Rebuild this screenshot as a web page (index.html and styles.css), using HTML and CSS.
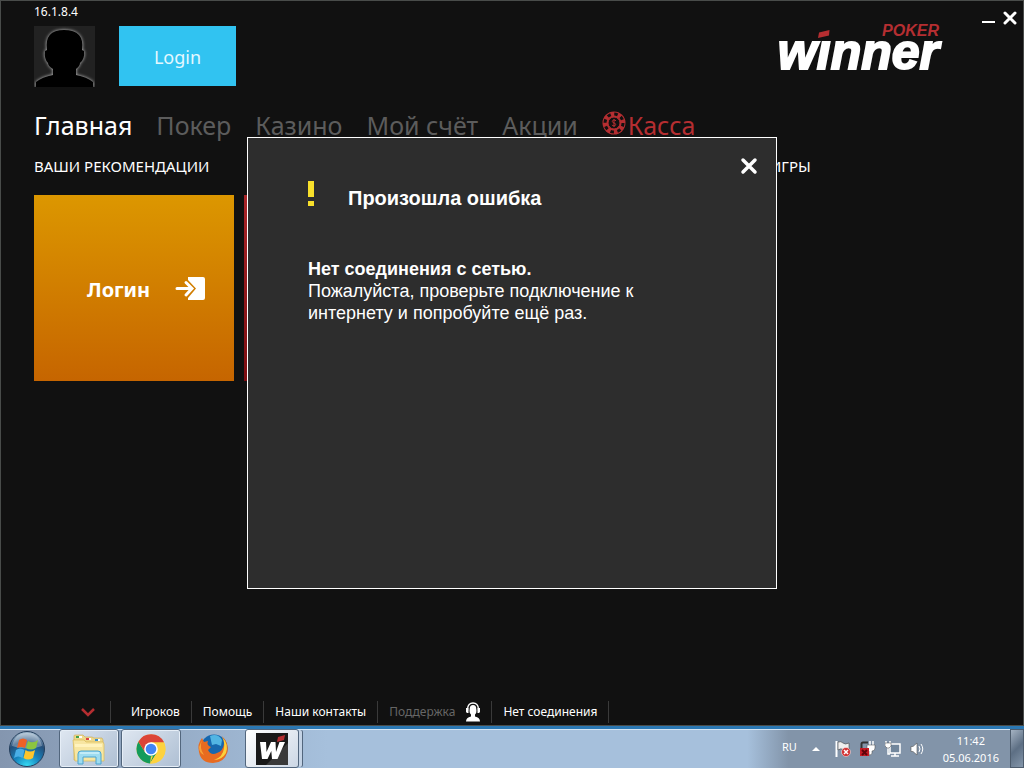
FILE: index.html
```html
<!DOCTYPE html>
<html lang="ru">
<head>
<meta charset="utf-8">
<title>Winner Poker</title>
<link rel="stylesheet" href="styles.css">
</head>
<body>
<div class="app">
  <header class="header">
    <div class="account">
      <span class="version">16.1.8.4</span>
      <div class="account-row">
        <svg class="avatar" viewBox="0 0 61 61" aria-hidden="true">
          <defs><filter id="glow" x="-30%" y="-30%" width="160%" height="160%"><feGaussianBlur stdDeviation="1.5"/></filter></defs>
          <rect width="61" height="61" fill="#222"/>
          <path fill="#aaa" stroke="#aaa" filter="url(#glow)" d="M2 61V56Q8 51 19 49V43Q14 40 14 37Q10 33 11 25L13 24Q10 4 30 4Q51 4 48 24L50 25Q51 33 46 37Q46 40 42 43V49Q53 51 59 56V61Z"/>
          <path d="M2 61V56Q8 51 19 49V43Q14 40 14 37Q10 33 11 25L13 24Q10 4 30 4Q51 4 48 24L50 25Q51 33 46 37Q46 40 42 43V49Q53 51 59 56V61Z"/>
        </svg>
        <button class="login-button" type="button">Login</button>
      </div>
    </div>
    <div class="logo" aria-label="Winner Poker">
      <span class="logo-sub">POKER</span>
      <span class="logo-name">wınner</span>
      <svg class="logo-dot" viewBox="0 0 12 8" aria-hidden="true"><path d="M1 2.500 11.500 0 11 5.500 0 8Z" fill="#b52e31"/></svg>
    </div>
    <div class="window-controls">
      <button type="button" aria-label="Свернуть"><svg width="13" height="14" viewBox="0 0 13 14"><path d="M0 11H13" stroke="#fff" stroke-width="2"/></svg></button>
      <button type="button" aria-label="Закрыть окно"><svg width="14" height="14" viewBox="0 0 14 14"><path d="M2 2 12 12M12 2 2 12" stroke="#fff" stroke-width="3" stroke-linecap="round"/></svg></button>
    </div>
  </header>

  <nav class="main-nav">
    <a class="active" href="#">Главная</a>
    <a href="#">Покер</a>
    <a href="#">Казино</a>
    <a href="#">Мой счёт</a>
    <a href="#">Акции</a>
    <a class="cashier" href="#"><svg width="24" height="24" viewBox="0 0 24 24" aria-hidden="true"><circle cx="12" cy="12" r="11.500" fill="#b52e31"/><circle cx="12" cy="12" r="9" fill="none" stroke="#111" stroke-width="3" stroke-dasharray="3.500 3.568"/><circle cx="12" cy="12" r="6" fill="#111" stroke="#b52e31"/><path d="M14 9.800Q13 8.800 11.800 9 10.200 9.300 10.300 10.500 10.500 11.600 12 12 13.800 12.400 13.700 13.600 13.500 14.900 12 14.900 10.700 14.900 9.900 14M12 8V16" fill="none" stroke="#b52e31"/></svg>Касса</a>
  </nav>

  <main class="content">
    <div class="headings">
      <h2>ВАШИ РЕКОМЕНДАЦИИ</h2>
      <h2>ИГРЫ</h2>
    </div>
    <div class="tiles">
      <button class="tile tile-login" type="button">Логин
        <svg width="31" height="24" viewBox="0 0 31 24" aria-hidden="true"><path d="M13 0H28Q30 0 30 2V21Q30 23 28 23H13V21L21 11.500 13 3Z" fill="#fff"/><path d="M2 11.500H16M11 5.500 17 11.500 11 18" fill="none" stroke="#fff" stroke-width="3" stroke-linecap="round"/></svg>
      </button>
      <div class="tile tile-red"></div>
    </div>
  </main>

  <footer class="status-bar">
    <button class="collapse" type="button" aria-label="Свернуть панель"><svg width="16" height="10" viewBox="0 0 16 10"><path d="M2 2 8 8 14 2" fill="none" stroke="#b52e31" stroke-width="2.500"/></svg></button>
    <a class="players" href="#">Игроков</a>
    <a href="#">Помощь</a>
    <a href="#">Наши контакты</a>
    <a class="support" href="#">Поддержка <svg width="16" height="20" viewBox="0 0 16 20" aria-hidden="true"><path d="M2.500 9V7Q3 1 8 1T13.500 7V9" fill="none" stroke="#fff" stroke-width="1.300"/><path d="M1 6H3.500V11H2L1 10ZM12.500 6H15V10L14 11H12.500ZM4.700 7Q4.700 3 8 3T11.300 7Q12 11 10 12.500V14.500Q15 15.500 15 19.500H1Q1 15.500 6 14.500V12.500Q4 11 4.700 7Z" fill="#fff"/></svg></a>
    <span>Нет соединения</span>
  </footer>

  <section class="dialog" role="alertdialog" aria-labelledby="dialog-title">
    <div class="dialog-head">
      <svg class="alert" width="8" height="26" viewBox="0 0 8 26" aria-hidden="true"><path d="M0 0H6V16H0ZM0 20H6V25H0Z" fill="#f8e02b"/></svg>
      <h1 id="dialog-title">Произошла ошибка</h1>
      <button type="button" aria-label="Закрыть"><svg width="18" height="18" viewBox="0 0 18 18"><path d="M3 3 15 15M15 3 3 15" stroke="#fff" stroke-width="3.500" stroke-linecap="round"/></svg></button>
    </div>
    <p><strong>Нет соединения с сетью.</strong><br>Пожалуйста, проверьте подключение к интернету и попробуйте ещё раз.</p>
  </section>
</div>

<div class="taskbar">
  <button class="start" type="button" aria-label="Пуск">
    <svg width="38" height="38" viewBox="0 0 38 38"><defs><radialGradient id="orb" cx=".5" cy="1" r=".95"><stop offset="0" stop-color="#36e0f7"/><stop offset=".4" stop-color="#1683bd"/><stop offset=".75" stop-color="#254e79"/><stop offset="1" stop-color="#9bb4ca"/></radialGradient></defs><circle cx="19" cy="19" r="17.500" fill="url(#orb)" stroke="#243e5c"/><path d="M4 16Q7 3 19 3T34 16Q19 21 4 16Z" fill="#fff" opacity=".3"/><path d="M11 10Q15 7 19 10L17 18Q13 16 9 18Z" fill="#ee6126"/><path d="M20 11Q25 14 30 10L28 18Q23 21 18 18Z" fill="#8cc53f"/><path d="M8 20Q12 17 16.500 20L14.500 28Q10 25 6 28Z" fill="#49aee6"/><path d="M17.500 20Q22 23 27 20L25 28Q20 31 15.500 28Z" fill="#fdc52c"/></svg>
  </button>
  <div class="task-list">
    <button class="task open" type="button" aria-label="Проводник">
      <svg width="34" height="32" viewBox="0 0 34 32"><path d="M2 3Q2 2 3 2H11L13 4H20L22 5H30L31 7V27H2Z" fill="#eed98c" stroke="#c9a94e" stroke-width=".6"/><path d="M4 3H10V5H4ZM14 5H19V7H14ZM23 6H28V8H23Z" fill="#fff"/><path d="M4 3H7V5H4Z" fill="#40a14b"/><path d="M14 5H17V7H14Z" fill="#d44"/><path d="M23 6H26V8H23Z" fill="#3890ce"/><path d="M1 7H12L14 9H31L32 11V28H3Z" fill="#f7e6a2" stroke="#d9b955" stroke-width=".7"/><path d="M3 11H30V14H3Z" fill="#fff3bd"/><path d="M6 31V21Q6 18 9 18H26Q29 18 29 21V31H24V24H11V31Z" fill="#9edcf0" stroke="#4ba4cf"/><path d="M8 20H27" stroke="#e6fbff"/></svg>
    </button>
    <button class="task open" type="button" aria-label="Chrome">
      <svg width="30" height="30" viewBox="0 0 30 30"><circle cx="15" cy="15" r="14.500" fill="#fdd23e"/><path d="M2.400 7.800 9 18 15 22 14 29.500A14.500 14.500 0 0 1 2.400 7.800Z" fill="#149b5b"/><path d="M14 29.500 21 18.500 15 20 9 19Q12 23 17 22Z" fill="#149b5b"/><path d="M21 18.500 14 29.500Q26 30 29 19 30 12 28 8.200H15Z" fill="#fdd23e"/><path d="M2.400 7.800A14.500 14.500 0 0 1 28 8.200H15L9 18Z" fill="#dc4437"/><circle cx="15" cy="15" r="6.800" fill="#fff"/><circle cx="15" cy="15" r="5.300" fill="#4285f4"/></svg>
    </button>
    <button class="task" type="button" aria-label="Firefox">
      <svg width="32" height="32" viewBox="0 0 32 32"><circle cx="17" cy="15" r="13.500" fill="#1768ae"/><path d="M13 3Q21 0 25 7L24 13 19 11 15 12Z" fill="#52b5e3"/><path d="M25 3Q32 10 30.500 19 27 30 16 30 4 30 2 19 0 11 5 5L7 9 11 8Q9 12 14 14L11 17Q14 23 20 20 26 18 27 11 27 6 25 3Z" fill="#e86b20"/><path d="M25 4Q32 11 29 20 25 27 17 27 26 24 27 15Q28 9 25 4Z" fill="#fbd13b"/><path d="M5 7Q2 15 7 22 2 20 2 14Z" fill="#f7a136"/></svg>
    </button>
    <button class="task open current" type="button" aria-label="Winner Poker">
      <svg width="32" height="32" viewBox="0 0 32 32"><path d="M0 0H32V32H0Z" fill="#191919"/><path d="M32 10V32H10Z" fill="#3a3a3a"/><path d="M4 9H10L10.500 19 15 9H19.500L20 19 23.500 9H29L21.500 26H16L15.300 18 11.500 26H6Z" fill="#fff"/><path d="M22 4 29 2 28 7 21 9Z" fill="#b52e31"/></svg>
    </button>
  </div>
  <div class="tray">
    <span class="lang">RU</span>
    <svg class="expand" width="8" height="4" viewBox="0 0 8 4" aria-hidden="true"><path d="M4 0 8 4H0Z" fill="#fff"/></svg>
    <svg width="16" height="16" viewBox="0 0 16 16" aria-hidden="true"><path d="M1.500 0V16" stroke="#fff" stroke-width="2"/><path d="M3 1Q6 0 8 2T14 2V9Q10 10 8 8.500T3 9Z" fill="#eee" stroke="#444" stroke-width=".6"/><circle cx="11" cy="11" r="4.500" fill="#d22f2f" stroke="#fff" stroke-width=".5"/><path d="M9 9 13 13M13 9 9 13" stroke="#fff" stroke-width="1.500"/></svg>
    <svg width="16" height="16" viewBox="0 0 16 16" aria-hidden="true"><path d="M1.500 12V3Q1.500 1.500 3 1.500H8" fill="none" stroke="#333" stroke-width="2"/><path d="M10 0V4M13 0V4" stroke="#fff" stroke-width="1.500"/><path d="M7 4H15V7Q15 10 12 10V12Q12 14 9 14V10Q7 9 7 7Z" fill="#fff" stroke="#444" stroke-width=".5"/><path d="M0 7H9V15H0Z" fill="#c41c25"/><path d="M2 9 7 14M7 9 2 14" stroke="#5e040a" stroke-width="2"/></svg>
    <svg width="16" height="16" viewBox="0 0 16 16" aria-hidden="true"><path d="M5 3H15V12H5Z" fill="#71869c" stroke="#fff" stroke-width="1.500"/><path d="M10 12V15M6 15H14M1 0V3M5 0V3M3 6V13H5" fill="none" stroke="#fff" stroke-width="1.500"/><path d="M0 2H6V5L4 7H2L0 5Z" fill="#fff" stroke="#444" stroke-width=".5"/></svg>
    <svg width="14" height="14" viewBox="0 0 14 14" aria-hidden="true"><path d="M1 4.500H3L7 1V13L3 9.500H1Z" fill="#fff" stroke="#555" stroke-width=".6"/><path d="M9 4Q11 7 9 10M11 2Q14.500 7 11 12" fill="none" stroke="#fff"/></svg>
    <time class="clock" datetime="2016-06-05T11:42">11:42<br>05.06.2016</time>
    <button class="show-desktop" type="button" aria-label="Показать рабочий стол"></button>
  </div>
</div>
</body>
</html>
```
FILE: styles.css
```css
* { box-sizing: border-box; }
body {
  display: flex;
  flex-direction: column;
  min-height: 100vh;
  margin: 0;
  background: #111;
  color: #fff;
  font-family: "Noto Sans", sans-serif;
}
button { padding: 0; border: 0; background: none; color: inherit; font: inherit; cursor: pointer; }
a { color: inherit; text-decoration: none; }
svg { display: block; flex: none; }

.app {
  position: relative;
  display: flex;
  flex: 1;
  flex-direction: column;
  box-shadow: inset 0 0 0 1px #494c4a;
}
.header { display: flex; padding: 3px 7px 0 34px; }
.account { flex: 1; }
.version { display: block; height: 23px; font-size: 12px; line-height: 18px; }
.account-row { display: flex; gap: 24px; }
.avatar { width: 61px; height: 61px; }
.login-button { width: 117px; height: 60px; padding-top: 1px; background: #31c3f1; color: #e4f8ff; font-size: 18px; }

.logo { position: relative; margin: 20px 43px 0 0; font-family: "Liberation Sans", sans-serif; font-style: italic; font-weight: bold; }
.logo-sub { display: block; color: #b52e31; font-size: 16px; line-height: 16px; text-align: right; }
.logo-name { display: block; font-size: 50px; line-height: 26px; -webkit-text-stroke: 2px #fff; }
.logo-dot { position: absolute; top: 7px; left: 40px; width: 12px; height: 8px; }

.window-controls { display: flex; align-items: flex-start; gap: 8px; padding-top: 8px; }

.main-nav { display: flex; gap: 24px; padding: 20px 34px 0; color: #5c5c5c; font-size: 25px; line-height: 36px; }
.main-nav .active { color: #fff; }
.main-nav .cashier { display: flex; gap: 2px; color: #b52e31; }
.cashier svg { margin-top: 4px; }

.content { flex: 1; padding: 13px 0 0 34px; }
.headings { display: grid; grid-template-columns: 1fr 254px; }
.headings h2 { margin: 0; font-size: 15px; font-weight: 400; line-height: 20px; }
.tiles { display: flex; gap: 10px; margin-top: 19px; }
.tile { width: 200px; height: 186px; }
.tile-login {
  display: flex;
  align-items: center;
  justify-content: space-between;
  padding: 2px 28px 0 53px;
  background: linear-gradient(#dc9700, #c66500);
  font-size: 20px;
  font-weight: 700;
}
.tile-red { background: linear-gradient(#a82428, #7c0c10); }

.status-bar { display: flex; align-items: center; margin-bottom: 3px; padding-left: 80px; font-size: 12px; line-height: 22px; }
.status-bar > * { display: flex; align-items: center; height: 22px; padding: 0 11px; border-right: 1px solid #3a3a3a; }
.status-bar .collapse { padding: 0 14px 0 0; }
.status-bar .players { padding-left: 20px; }
.status-bar .support { gap: 10px; padding-right: 10px; color: #666; }

.dialog {
  position: absolute;
  top: 50%;
  left: 50%;
  width: 530px;
  height: 452px;
  padding: 19px 18px 18px 60px;
  transform: translate(-50%, -50%);
  border: 1px solid #fff;
  background: #2d2d2d;
  font-family: "Liberation Sans", sans-serif;
  font-size: 18px;
  line-height: 22px;
}
.dialog-head { display: flex; align-items: flex-start; }
.alert { margin: 24px 32px 0 0; }
.alert + h1 { flex: 1; margin: 29px 0 0; font-size: 20px; line-height: 24px; }
.dialog p { max-width: 350px; margin: 48px 0 0; }

.taskbar {
  display: flex;
  height: 42px;
  border-top: 3px solid #2b78b4;
  background:
    linear-gradient(#d5e5f4, #d5e5f4) top / 100% 1px no-repeat,
    linear-gradient(90deg, #8496af, #a6c0dc 32%, #a6c0dc 73%, #8294a9 77%, #8294a9);
}
.start { width: 54px; padding-left: 8px; }
.task-list { display: flex; flex: 1; gap: 2px; padding-left: 5px; }
.task { display: flex; align-items: center; justify-content: center; width: 60px; height: 39px; border: 1px solid transparent; border-radius: 3px; }
.task.open { border-color: #52667d; background: linear-gradient(135deg, #dfe7f1, #aebfd3); box-shadow: inset 0 0 0 1px #e6eef7; }
.task.current { width: 54px; background: linear-gradient(135deg, #fff, #ccd7e5); box-shadow: 4px 0 0 -1px #c4d3e5, 5px 0 0 -1px #52667d; }
.tray { display: flex; align-items: center; gap: 9px; font-size: 11px; }
.lang { margin: 0 6px 5px 0; }
.expand { margin-right: 6px; }
.clock { margin-left: 10px; line-height: 17px; text-align: center; }
.show-desktop { align-self: stretch; width: 14px; margin-left: 2px; border: 1px solid #4d5c6d; background: linear-gradient(135deg, #a5b3c3, #5d6f84 50%, #8496aa); }
```
